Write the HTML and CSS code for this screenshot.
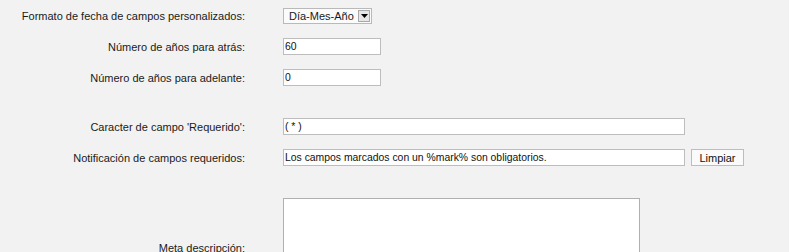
FILE: index.html
```html
<!DOCTYPE html>
<html lang="es">
<head>
<meta charset="utf-8">
<title>Configuración</title>
<link rel="stylesheet" href="styles.css">
</head>
<body>
<div class="form">
  <div class="row">
    <label class="lbl">Formato de fecha de campos personalizados:</label>
    <div class="ctl">
      <div class="select">
        <span class="sel-text">Día-Mes-Año</span>
        <span class="sel-btn"><svg width="7" height="4" viewBox="0 0 7 4"><polygon points="0,0 7,0 3.5,4" fill="#000"/></svg></span>
      </div>
    </div>
  </div>
  <div class="row">
    <label class="lbl">Número de años para atrás:</label>
    <div class="ctl"><input class="inp short" type="text" value="60"></div>
  </div>
  <div class="row">
    <label class="lbl">Número de años para adelante:</label>
    <div class="ctl"><input class="inp short" type="text" value="0"></div>
  </div>
  <div class="spacer"></div>
  <div class="row">
    <label class="lbl">Caracter de campo 'Requerido':</label>
    <div class="ctl"><input class="inp long" type="text" value="( * )"></div>
  </div>
  <div class="row">
    <label class="lbl">Notificación de campos requeridos:</label>
    <div class="ctl">
      <input class="inp long" type="text" value="Los campos marcados con un %mark% son obligatorios.">
      <button class="btn" type="button">Limpiar</button>
    </div>
  </div>
  <div class="row tall">
    <label class="lbl">Meta descripción:</label>
    <div class="ctl"><textarea class="area"></textarea></div>
  </div>
</div>
</body>
</html>
```
FILE: styles.css
```css
html, body {
  margin: 0;
  padding: 0;
  background: #f2f2f2;
}
body {
  font-family: "Liberation Sans", Arial, sans-serif;
  font-size: 11px;
  color: #1a1a1a;
  overflow: hidden;
}
.form {
  display: flex;
  flex-direction: column;
}
.row {
  display: grid;
  grid-template-columns: 245px 1fr;
  column-gap: 38px;
  align-items: center;
  height: 31px;
}
.spacer {
  height: 18px;
}
.row.tall {
  height: auto;
  margin-top: 25px;
}
.lbl {
  text-align: right;
  white-space: nowrap;
}
.ctl {
  display: flex;
  align-items: center;
  gap: 5px;
}
.select {
  display: flex;
  align-items: center;
  justify-content: space-between;
  box-sizing: border-box;
  width: 89px;
  height: 16px;
  border: 1px solid #b9b9b9;
  background: #fbfbfb;
  padding: 0 1px 0 5px;
}
.sel-text {
  line-height: 14px;
}
.sel-btn {
  display: flex;
  align-items: center;
  justify-content: center;
  box-sizing: border-box;
  width: 12px;
  height: 12px;
  border: 1px solid #a8a8a8;
  background: #e6e6e6;
}
.inp {
  box-sizing: border-box;
  height: 17px;
  border: 1px solid #bdbdbd;
  background: #fff;
  padding: 0 1px;
  margin: 0;
  font-family: inherit;
  font-size: 10.4px;
  color: #111;
  outline: none;
}
.short { width: 98px; }
.long { width: 402px; }
.btn {
  box-sizing: border-box;
  width: 53px;
  height: 17px;
  border: 1px solid #bdbdbd;
  background: #fafafa;
  font: inherit;
  color: #111;
  padding: 0;
  margin: 0 0 0 1px;
}
.area {
  box-sizing: border-box;
  width: 357px;
  height: 100px;
  border: 1px solid #b0b0b0;
  background: #fff;
  margin: 0;
  padding: 0;
  resize: none;
  display: block;
}
```
